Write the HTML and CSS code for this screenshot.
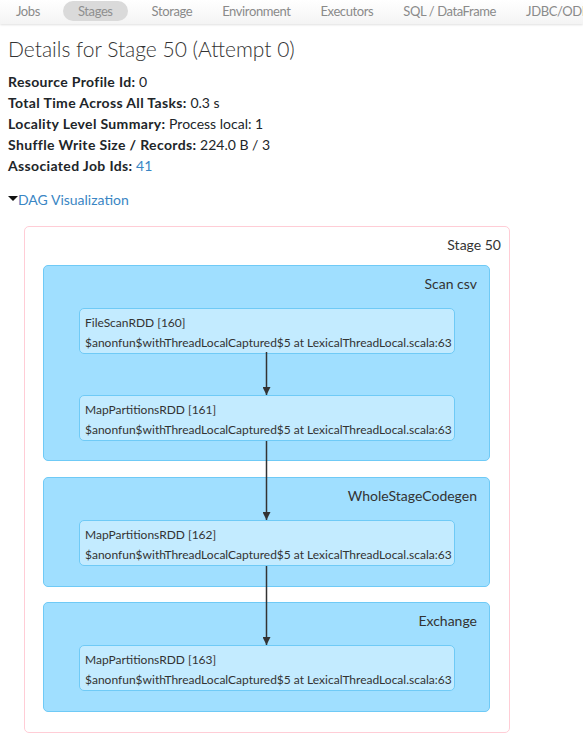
FILE: index.html
```html
<!DOCTYPE html>
<html>
<head>
<meta charset="utf-8">
<link rel="stylesheet" href="styles.css">
</head>
<body>
<nav class="navbar">
  <ul class="nav">
    <li class="nav-item">Jobs</li>
    <li class="nav-item active">Stages</li>
    <li class="nav-item">Storage</li>
    <li class="nav-item">Environment</li>
    <li class="nav-item">Executors</li>
    <li class="nav-item">SQL / DataFrame</li>
    <li class="nav-item">JDBC/ODBC Server</li>
  </ul>
</nav>
<main class="content">
  <h3 class="title">Details for Stage 50 (Attempt 0)</h3>
  <ul class="summary">
    <li><strong>Resource Profile Id:</strong> 0</li>
    <li><strong>Total Time Across All Tasks:</strong> 0.3 s</li>
    <li><strong>Locality Level Summary:</strong> Process local: 1</li>
    <li><strong>Shuffle Write Size / Records:</strong> 224.0 B / 3</li>
    <li><strong>Associated Job Ids:</strong> <a class="link" href="#">41</a></li>
  </ul>
  <div class="dag-toggle"><span class="caret"></span><a class="link" href="#">DAG Visualization</a></div>
  <div class="stage">
    <div class="stage-label">Stage 50</div>
    <div class="cluster first">
      <div class="cluster-label">Scan csv</div>
      <div class="node"><div>FileScanRDD [160]</div><div>$anonfun$withThreadLocalCaptured$5 at LexicalThreadLocal.scala:63</div></div>
      <div class="node n2"><div>MapPartitionsRDD [161]</div><div>$anonfun$withThreadLocalCaptured$5 at LexicalThreadLocal.scala:63</div></div>
    </div>
    <div class="cluster">
      <div class="cluster-label">WholeStageCodegen</div>
      <div class="node"><div>MapPartitionsRDD [162]</div><div>$anonfun$withThreadLocalCaptured$5 at LexicalThreadLocal.scala:63</div></div>
    </div>
    <div class="cluster">
      <div class="cluster-label">Exchange</div>
      <div class="node"><div>MapPartitionsRDD [163]</div><div>$anonfun$withThreadLocalCaptured$5 at LexicalThreadLocal.scala:63</div></div>
    </div>
    <svg class="edges" width="484" height="506" viewBox="0 0 484 506">
      <defs>
        <marker id="ah" viewBox="0 0 10 10" refX="10" refY="5" markerWidth="8" markerHeight="8" markerUnits="userSpaceOnUse" orient="auto">
          <path d="M0,0 L10,5 L0,10 z" fill="#333"/>
        </marker>
      </defs>
      <line x1="241.5" y1="125" x2="241.5" y2="168" stroke="#333" stroke-width="1.5" marker-end="url(#ah)"/>
      <line x1="241.5" y1="214" x2="241.5" y2="293" stroke="#333" stroke-width="1.5" marker-end="url(#ah)"/>
      <line x1="241.5" y1="339" x2="241.5" y2="418" stroke="#333" stroke-width="1.5" marker-end="url(#ah)"/>
    </svg>
  </div>
</main>
</body>
</html>
```

FILE: styles.css
```css
html, body {
  margin: 0;
  padding: 0;
  background: #fff;
}
body {
  font-family: "Lato", "Open Sans", sans-serif;
  color: #212529;
  font-size: 14px;
  overflow: hidden;
}
.navbar {
  height: 24px;
  background: linear-gradient(#ffffff, #f4f4f4);
  box-shadow: 0 1px 2px rgba(0,0,0,0.12);
  overflow: hidden;
}
.nav {
  list-style: none;
  margin: 0;
  padding: 0 0 0 1px;
  display: flex;
  white-space: nowrap;
}
.nav-item {
  padding: 0 15px;
  height: 20px;
  margin-top: 1px;
  line-height: 20px;
  font-size: 13px;
  letter-spacing: -0.4px;
  color: #8a8a8a;
  border-radius: 10px;
}
.nav-item.active {
  background: #dadada;
  color: #8f8f8f;
  margin: 1px 9px 0 8px;
}
.content {
  padding: 0 8px;
}
.title {
  margin: 11px 0 0 0;
  font-size: 21px;
  font-weight: 300;
  line-height: 28px;
  color: #333;
}
.summary {
  list-style: none;
  margin: 8px 0 0 0;
  padding: 0;
}
.summary li {
  line-height: 21px;
}
.summary strong {
  font-weight: 700;
  letter-spacing: 0.35px;
}
.link {
  color: #3a86c4;
  text-decoration: none;
}
.dag-toggle {
  margin-top: 14px;
  line-height: 20px;
}
.caret {
  display: inline-block;
  width: 0;
  height: 0;
  border-left: 5px solid transparent;
  border-right: 5px solid transparent;
  border-top: 5px solid #111;
  vertical-align: 4px;
}
.stage {
  position: relative;
  box-sizing: border-box;
  width: 486px;
  margin: 16px 0 0 16px;
  border: 1px solid #ffcdd6;
  border-radius: 5px;
  padding: 0 0 20px 18px;
}
.stage-label {
  height: 38px;
  box-sizing: border-box;
  padding: 8px 8px 0 0;
  line-height: 20px;
  text-align: right;
  font-size: 14px;
  color: #333;
}
.cluster {
  box-sizing: border-box;
  width: 447px;
  background: #a0dfff;
  border: 1px solid #6fcaf6;
  border-radius: 5px;
  padding: 0 0 20px 35px;
  margin-bottom: 15px;
}
.cluster.first {
  padding-bottom: 19px;
  margin-bottom: 16px;
}
.cluster:last-of-type {
  margin-bottom: 0;
}
.cluster-label {
  height: 42px;
  box-sizing: border-box;
  padding: 8px 12px 0 0;
  line-height: 20px;
  text-align: right;
  font-size: 14px;
  color: #333;
}
.node {
  box-sizing: border-box;
  width: 376px;
  height: 46px;
  background: #c3ebff;
  border: 1px solid #6fcaf6;
  border-radius: 5px;
  padding: 4px 0 0 5px;
  font-size: 12px;
  line-height: 20px;
  color: #333;
  white-space: nowrap;
}
.node.n2 {
  margin-top: 41px;
}
.edges {
  position: absolute;
  left: 0;
  top: 0;
  pointer-events: none;
}
```
